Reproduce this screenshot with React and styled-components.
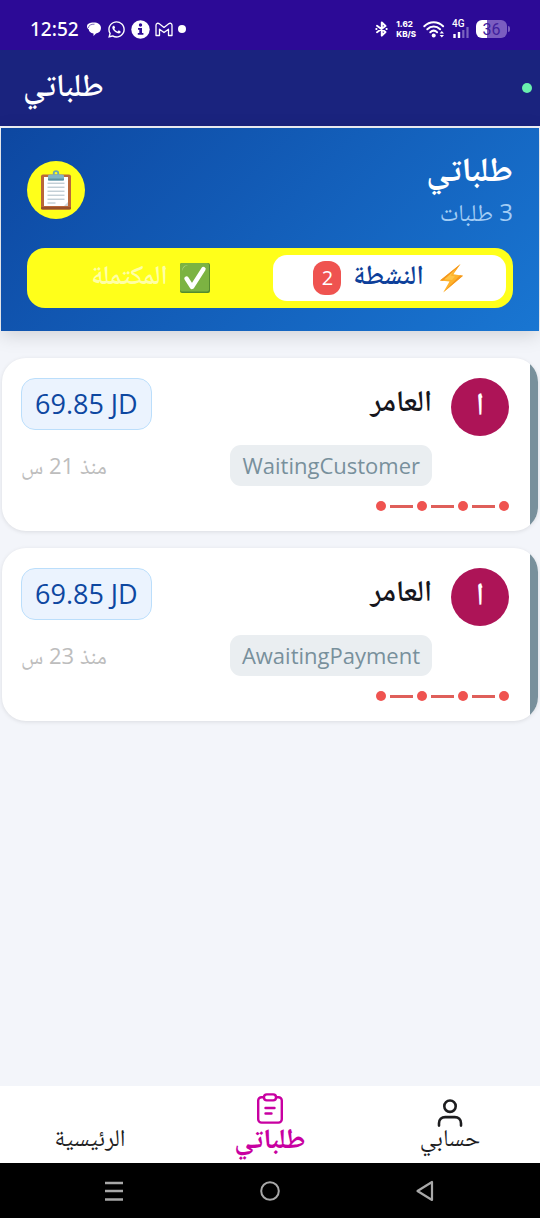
import React from "react";
import styled, { createGlobalStyle } from "styled-components";
import { FaWhatsapp } from "react-icons/fa";

const orders = [
  { id: 1, name: "العامر", status: "WaitingCustomer", price: "69.85 JD", time: "منذ 21 س" },
  { id: 2, name: "العامر", status: "AwaitingPayment", price: "69.85 JD", time: "منذ 23 س" },
];

const ChatIcon = () => (
  <svg width="16" height="16" viewBox="0 0 16 16" aria-hidden="true">
    <path
      d="M1 5.500C1 2.500 4 1.500 7.500 1.500c4.500 0 7.500 2 7.500 5.500 0 3-2 5-5 5.400L7.500 15v-2.600C4.500 12 3 10.500 2.800 8.500 1.500 7.500 1 6.500 1 5.500z"
      fill="#fff"
    />
    <path d="M2.300 7C2.600 4.400 5 3 8.500 3.200" fill="none" stroke="#2c0a96" strokeWidth=".6" />
  </svg>
);

const InfoIcon = () => (
  <svg width="19" height="19" viewBox="0 0 19 19" aria-hidden="true">
    <circle cx="9.500" cy="9.500" r="9.200" fill="#fff" />
    <circle cx="9.500" cy="5" r="1.700" fill="#2c0a96" />
    <path d="M7 8h4v5h1.400v1.800H6.800V13h1.500V9.700H7z" fill="#2c0a96" />
  </svg>
);

const MailIcon = () => (
  <svg width="18" height="15" viewBox="0 0 18 15" aria-hidden="true">
    <path
      d="M1 3.200C1 1.200 3 .8 4.300 1.800L9 5.400l4.700-3.600C15 .8 17 1.200 17 3.200V13.500h-3.500V7.200L9 10.600 4.500 7.200v6.300H1z"
      fill="none"
      stroke="#fff"
      strokeWidth="1.300"
      strokeLinejoin="round"
    />
  </svg>
);

const BluetoothIcon = () => (
  <svg width="14" height="18" viewBox="0 0 14 18" aria-hidden="true">
    <path
      d="M2 5.800 10.500 12l-3.700 3.600V2.400L10.500 6 2 12.200"
      fill="none"
      stroke="#fff"
      strokeWidth="2"
      strokeLinejoin="round"
      strokeLinecap="round"
    />
    <path d="M1.200 9h.4M11.400 9h.4" stroke="#fff" strokeWidth="1.800" strokeLinecap="round" />
  </svg>
);

const WifiIcon = () => (
  <svg width="22" height="18" viewBox="0 0 22 18" aria-hidden="true">
    <g fill="none" stroke="#fff" strokeWidth="2" strokeLinecap="round">
      <path d="M1.300 6.200c5.400-5.400 13.400-5.400 18.800 0" />
      <path d="M4.300 9.300c3.800-3.700 9-3.700 12.800 0" />
      <path d="M7.300 12.200c2-1.900 4.800-1.900 6.800 0" />
    </g>
    <circle cx="10.700" cy="15.500" r="2" fill="#fff" />
    <path d="m18.800 11 2.200 2.600h-4.400zM18.800 17.500l2.200-2.600h-4.400z" fill="#fff" />
  </svg>
);

const SignalIcon = () => (
  <svg width="17" height="11" viewBox="0 0 17 11" aria-hidden="true">
    <path d="M2.500 7v4M7 5v6" stroke="#fff" strokeWidth="2.400" />
    <path d="M11.300 3v8M15.500 0v11" stroke="#7a63bf" strokeWidth="2.200" />
  </svg>
);

const ClipboardEmoji = () => (
  <svg width="32" height="40" viewBox="0 0 32 40" aria-hidden="true">
    <rect x="1" y="4.500" width="30" height="35" rx="2" fill="#b9673a" />
    <rect x="1" y="37" width="30" height="2.500" rx="1" fill="#99502b" />
    <path d="M4 7h24v29H4z" fill="#fff" />
    <path d="M24 36h4v-4z" fill="#cfd8dc" />
    <path d="M7.500 13.200h17M7.500 17.200h17M7.500 21.200h17M7.500 25.200h17M7.500 29.200h17M7.500 33h8" stroke="#a9bac4" strokeWidth="1" />
    <circle cx="16" cy="3.500" r="2.300" fill="none" stroke="#6aa5b5" strokeWidth="1.800" />
    <path d="M8 6c0-1 1-1.500 3-1.500h10c2 0 3 .5 3 1.500v3.500c0 .8-.5 1-1 1H9c-.5 0-1-.2-1-1z" fill="#82b4c3" />
    <path d="M8 8.500h16v1c0 .8-.5 1-1 1H9c-.5 0-1-.2-1-1z" fill="#5b91a3" />
  </svg>
);

const BoltEmoji = () => (
  <svg width="30" height="30" viewBox="0 0 30 30" aria-hidden="true">
    <path d="M24.500 1 4 17.500l9.500 1L7.200 29.500 27 12.800l-9.600-1.600z" fill="#feb32c" />
    <path d="M24.500 1 4 17.500l3 .3L20 6.800zM7.200 29.500 27 12.800l-3-.5z" fill="#f5971c" />
    <path d="m20.500 5.500-12 10.800 7.500.7 3-3.500-4.500-1z" fill="#ffc546" />
  </svg>
);

const CheckEmoji = () => (
  <svg width="30" height="30" viewBox="0 0 30 30" aria-hidden="true">
    <rect width="30" height="30" rx="2" fill="#558b2f" />
    <rect width="29" height="28.500" rx="2" fill="#7cb342" />
    <path d="M2 8c.3-4 2.500-6 6-6-3 .8-5 2.800-6 6z" fill="#aed581" />
    <path d="M6.500 15.500 12 24 23.500 6" fill="none" stroke="#fff" strokeWidth="4.400" strokeLinecap="round" strokeLinejoin="round" />
  </svg>
);

const OrdersIcon = () => (
  <svg width="28" height="34" viewBox="0 0 28 34" aria-hidden="true">
    <g fill="none" stroke="currentColor" strokeWidth="2.400" strokeLinejoin="round" strokeLinecap="round">
      <path d="M7.500 4.200H5.600a3.400 3.400 0 0 0-3.400 3.400v18.600a3.400 3.400 0 0 0 3.400 3.400h16.800a3.400 3.400 0 0 0 3.400-3.400V7.600a3.400 3.400 0 0 0-3.400-3.400h-1.900" />
      <rect x="8" y="1.400" width="12" height="6" rx="2.800" />
      <path d="M9.500 15h9M9.500 20.500h6" />
    </g>
  </svg>
);

const UserIcon = () => (
  <svg width="28" height="34" viewBox="0 0 28 34" aria-hidden="true">
    <g fill="none" stroke="currentColor" strokeWidth="2.600" strokeLinecap="round">
      <circle cx="14" cy="13.200" r="5.700" />
      <path d="M3 32.600v-2.400c0-3.600 2.600-6.100 6.200-6.100h9.600c3.600 0 6.200 2.500 6.200 6.100v2.400" />
    </g>
  </svg>
);

const OrderCard = ({ order }) => {
  return (
    <Card>
      <Stripe />
      <CardBody>
        <CardMain>
          <Avatar>{order.name.charAt(0)}</Avatar>
          <Info>
            <Row $height={52}>
              <Name>{order.name}</Name>
              <Price dir="ltr">{order.price}</Price>
            </Row>
            <Row $height={41}>
              <Status>{order.status}</Status>
              <Time>{order.time}</Time>
            </Row>
          </Info>
        </CardMain>
        <Tracker>
          <Dot />
          <Line />
          <Dot />
          <Line />
          <Dot />
          <Line />
          <Dot />
        </Tracker>
      </CardBody>
    </Card>
  );
};

export default function App() {
  return (
    <Screen>
      <GlobalStyle />
      <StatusBar>
        <StatusGroup $gap={5}>
          <Clock>12:52</Clock>
          <ChatIcon />
          <FaWhatsapp size={19} aria-hidden="true" />
          <InfoIcon />
          <MailIcon />
          <MoreDot />
        </StatusGroup>
        <StatusGroup $gap={7}>
          <BluetoothIcon />
          <Speed>
            <span>1.62</span>
            <span>KB/S</span>
          </Speed>
          <WifiIcon />
          <Network>
            <span>4G</span>
            <SignalIcon />
          </Network>
          <BatteryWrap>
            <Battery>36</Battery>
            <BatteryTip />
          </BatteryWrap>
        </StatusGroup>
      </StatusBar>
      <AppBar>
        <AppTitle>طلباتي</AppTitle>
        <OnlineDot />
      </AppBar>

      <Main dir="rtl">
        <Hero>
          <HeroTop>
            <div>
              <HeroTitle>طلباتي</HeroTitle>
              <HeroCount>3 طلبات</HeroCount>
            </div>
            <HeroIcon>
              <ClipboardEmoji />
            </HeroIcon>
          </HeroTop>
          <Tabs role="tablist">
            <Tab type="button" role="tab" aria-selected="true" $active>
              <BoltEmoji />
              <TabLabel>النشطة</TabLabel>
              <Badge>2</Badge>
            </Tab>
            <Tab type="button" role="tab" aria-selected="false">
              <CheckEmoji />
              <TabLabel>المكتملة</TabLabel>
            </Tab>
          </Tabs>
        </Hero>
        <List>
          {orders.map((order) => (
            <OrderCard key={order.id} order={order} />
          ))}
        </List>
      </Main>

      <BottomNav dir="rtl">
        <NavLink href="#account">
          <UserIcon />
          <span>حسابي</span>
        </NavLink>
        <NavLink href="#orders" $active aria-current="page">
          <OrdersIcon />
          <span>طلباتي</span>
        </NavLink>
        <NavLink href="#home">
          <span>الرئيسية</span>
        </NavLink>
      </BottomNav>
      <SystemNav>
        <SystemButton type="button" aria-label="Recent apps">
          <svg width="22" height="22" viewBox="0 0 22 22">
            <path d="M2 3h18M2 11h18M2 19.500h18" stroke="#a8a8a8" strokeWidth="2.400" />
          </svg>
        </SystemButton>
        <SystemButton type="button" aria-label="Home">
          <svg width="22" height="22" viewBox="0 0 22 22">
            <circle cx="11" cy="11" r="8.800" fill="none" stroke="#a8a8a8" strokeWidth="2" />
          </svg>
        </SystemButton>
        <SystemButton type="button" aria-label="Back">
          <svg width="22" height="22" viewBox="0 0 22 22">
            <path d="M17 2v18L2.500 11z" fill="none" stroke="#a8a8a8" strokeWidth="2.200" strokeLinejoin="round" />
          </svg>
        </SystemButton>
      </SystemNav>
    </Screen>
  );
}

const GlobalStyle = createGlobalStyle`
  * {
    box-sizing: border-box;
  }
  body {
    margin: 0;
    background-color: #f3f5fa;
    font-family: "Open Sans", "Noto Naskh Arabic", "Noto Sans", "DejaVu Sans", sans-serif;
  }
  svg {
    display: block;
    flex-shrink: 0;
  }
`;
const Screen = styled.div`
  min-height: 100vh;
  display: flex;
  flex-direction: column;
`;
const StatusBar = styled.div`
  height: 50px;
  padding: 8px 30px 0;
  display: flex;
  align-items: center;
  justify-content: space-between;
  background-color: #2c0a96;
  color: #fff;
`;
const StatusGroup = styled.div`
  display: flex;
  align-items: center;
  gap: ${(props) => props.$gap}px;
`;
const Clock = styled.span`
  margin-right: 2px;
  font-family: "Noto Sans", sans-serif;
  font-size: 19px;
  font-weight: 500;
`;
const MoreDot = styled.span`
  width: 8px;
  height: 8px;
  border-radius: 50%;
  background-color: #fff;
`;
const Speed = styled.span`
  display: flex;
  flex-direction: column;
  font-family: Inter, sans-serif;
  font-size: 8px;
  line-height: 10px;
  font-weight: 800;
`;
const Network = styled.span`
  display: flex;
  flex-direction: column;
  font-family: Roboto, sans-serif;
  font-size: 10px;
  line-height: 7px;
  font-weight: 500;
`;
const BatteryWrap = styled.span`
  display: flex;
  align-items: center;
  gap: 1px;
`;
const Battery = styled.span`
  width: 31px;
  height: 18px;
  border-radius: 6px;
  background: linear-gradient(to right, #fff 36%, #7a5dc0 36%);
  color: #40209c;
  font-family: Roboto, sans-serif;
  font-size: 16px;
  line-height: 19px;
  text-align: center;
`;
const BatteryTip = styled.span`
  width: 2px;
  height: 6px;
  border-radius: 0 2px 2px 0;
  background-color: #7a5dc0;
`;
const AppBar = styled.header`
  height: 76px;
  padding: 0 8px 0 23px;
  display: flex;
  align-items: center;
  justify-content: space-between;
  background-color: #1a237e;
  color: #fff;
`;
const AppTitle = styled.h1`
  margin: 0;
  padding-bottom: 8px;
  font-size: 32px;
  line-height: 40px;
  font-weight: 600;
`;
const OnlineDot = styled.span`
  width: 10px;
  height: 10px;
  border-radius: 50%;
  background-color: #69f0ae;
`;
const Main = styled.main`
  flex: 1;
  padding: 2px 1px 16px;
`;
const Hero = styled.section`
  padding: 22px 26px 23px;
  background: linear-gradient(135deg, #0d47a1, #1976d2);
  box-shadow: 0 4px 18px rgba(0, 0, 0, 0.15);
`;
const HeroTop = styled.div`
  height: 80px;
  margin-bottom: 18px;
  display: flex;
  align-items: center;
  justify-content: space-between;
`;
const HeroTitle = styled.h2`
  margin: 0;
  padding-bottom: 8px;
  color: #fff;
  font-size: 34px;
  line-height: 36px;
  font-weight: 700;
`;
const HeroCount = styled.p`
  margin: 0;
  color: #a3cdf5;
  font-size: 24px;
  line-height: 36px;
`;
const HeroIcon = styled.div`
  width: 58px;
  height: 58px;
  display: flex;
  align-items: center;
  justify-content: center;
  border-radius: 50%;
  background-color: #ffff1a;
`;
const Tabs = styled.div`
  height: 60px;
  padding: 7px;
  display: flex;
  gap: 6px;
  border-radius: 18px;
  background-color: #ffff1a;
`;
const Tab = styled.button`
  flex: 1;
  padding: 0;
  display: flex;
  align-items: center;
  justify-content: center;
  gap: 12px;
  border: none;
  border-radius: 14px;
  background-color: ${(props) => (props.$active ? "#fff" : "transparent")};
  color: ${(props) => (props.$active ? "#0d3f9a" : "#ffffa6")};
  font-family: inherit;
`;
const TabLabel = styled.span`
  padding-bottom: 8px;
  font-size: 27px;
  line-height: 36px;
  font-weight: 600;
`;
const Badge = styled.span`
  width: 28px;
  height: 34px;
  border-radius: 12px;
  background-color: #ef5350;
  color: #fff;
  font-size: 20px;
  line-height: 34px;
`;
const List = styled.div`
  margin-top: 27px;
  padding: 0 1px;
  display: flex;
  flex-direction: column;
  gap: 17px;
`;
const Card = styled.article`
  display: flex;
  overflow: hidden;
  border-radius: 24px;
  background-color: #fff;
  box-shadow: 0 1px 4px rgba(0, 0, 0, 0.1);
`;
const Stripe = styled.span`
  width: 8px;
  background-color: #78909c;
`;
const CardBody = styled.div`
  flex: 1;
  padding: 20px 21px 20px 19px;
`;
const CardMain = styled.div`
  display: flex;
  gap: 19px;
`;
const Avatar = styled.span`
  width: 58px;
  height: 58px;
  flex-shrink: 0;
  border-radius: 50%;
  background-color: #ad1457;
  color: #fff;
  font-size: 32px;
  line-height: 50px;
  font-weight: 600;
  text-align: center;
`;
const Info = styled.div`
  flex: 1;
  display: flex;
  flex-direction: column;
  gap: 15px;
`;
const Row = styled.div`
  height: ${(props) => props.$height}px;
  display: flex;
  align-items: center;
  justify-content: space-between;
`;
const Name = styled.h3`
  margin: 0;
  padding-bottom: 8px;
  color: #16161d;
  font-size: 30px;
  line-height: 36px;
  font-weight: 600;
`;
const Price = styled.span`
  padding: 0 13px;
  border: 1px solid #bbdefb;
  border-radius: 14px;
  background-color: #ebf3fe;
  color: #0d47a1;
  font-size: 27px;
  line-height: 50px;
`;
const Status = styled.span`
  padding: 0 12px;
  border-radius: 11px;
  background-color: #eaeef1;
  color: #78909c;
  font-size: 22px;
  line-height: 41px;
`;
const Time = styled.span`
  padding-bottom: 2px;
  color: #bdbdbd;
  font-size: 22px;
  line-height: 36px;
`;
const Tracker = styled.div`
  margin-top: 15px;
  display: flex;
  align-items: center;
  gap: 4px;
`;
const Dot = styled.span`
  width: 10px;
  height: 10px;
  border-radius: 50%;
  background-color: #ef5350;
`;
const Line = styled.span`
  width: 23px;
  height: 3px;
  background-color: #df5f5a;
`;
const BottomNav = styled.nav`
  height: 77px;
  display: flex;
  background-color: #fff;
`;
const NavLink = styled.a`
  flex: 1;
  padding-bottom: 16px;
  display: flex;
  flex-direction: column;
  align-items: center;
  justify-content: flex-end;
  color: ${(props) => (props.$active ? "#c800a1" : "#1d1d1f")};
  font-size: ${(props) => (props.$active ? 28 : 24)}px;
  line-height: 20px;
  font-weight: ${(props) => (props.$active ? 700 : 400)};
  text-decoration: none;
`;
const SystemNav = styled.div`
  height: 55px;
  padding: 0 36px;
  display: flex;
  background-color: #000;
`;
const SystemButton = styled.button`
  flex: 1;
  padding: 0;
  display: flex;
  align-items: center;
  justify-content: center;
  border: none;
  background: none;
`;
